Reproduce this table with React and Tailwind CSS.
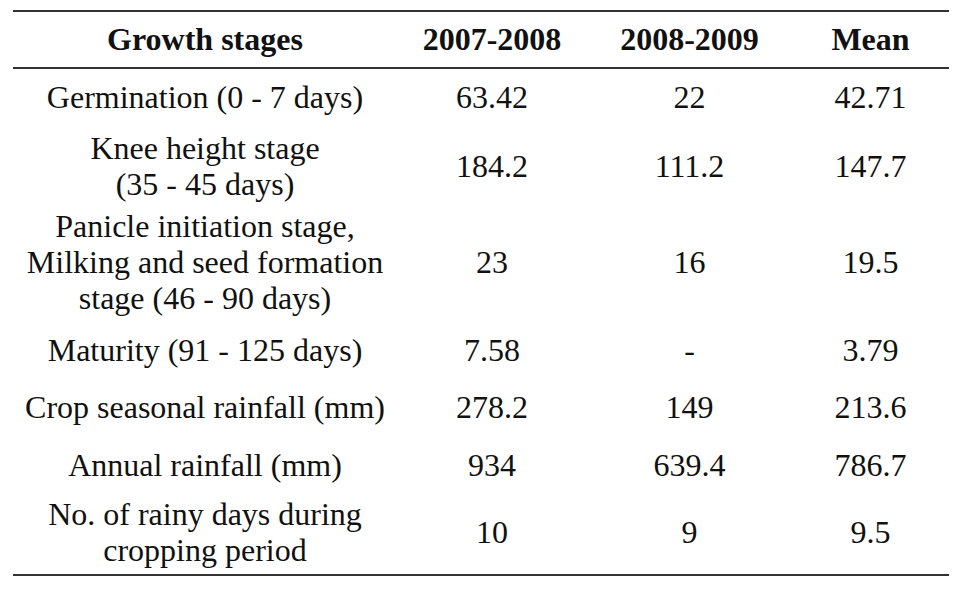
const rows = [
  { stage: ["Germination (0 - 7 days)"], a: "63.42", b: "22", mean: "42.71", pad: "pt-[10px] pb-[7px]" },
  { stage: ["Knee height stage", "(35 - 45 days)"], a: "184.2", b: "111.2", mean: "147.7", pad: "pt-[8px] pb-[3px]" },
  {
    stage: ["Panicle initiation stage,", "Milking and seed formation", "stage (46 - 90 days)"],
    a: "23",
    b: "16",
    mean: "19.5",
    pad: "pt-[3px] pb-[8px]",
  },
  { stage: ["Maturity (91 - 125 days)"], a: "7.58", b: "-", mean: "3.79", pad: "pt-[8px] pb-[10px]" },
  { stage: ["Crop seasonal rainfall (mm)"], a: "278.2", b: "149", mean: "213.6", pad: "pt-[11px] pb-[11px]" },
  { stage: ["Annual rainfall (mm)"], a: "934", b: "639.4", mean: "786.7", pad: "pt-[11px] pb-[6px]" },
  { stage: ["No. of rainy days during", "cropping period"], a: "10", b: "9", mean: "9.5", pad: "pt-[7px] pb-[6px]" },
];

function Row({ cells, pad, bold }) {
  return (
    <div className={`grid grid-cols-[384px_190px_205px_157px] items-center ${pad}`}>
      {cells.map((c, i) => (
        <div key={i} className={`text-center whitespace-nowrap ${bold ? "font-bold" : ""}`}>
          {Array.isArray(c)
            ? c.map((line, j) => <div key={j}>{line}</div>)
            : c}
        </div>
      ))}
    </div>
  );
}

export default function App() {
  return (
    <div className="w-[956px] h-[594px] bg-white pt-[10px] pl-[13px] text-[32px] leading-[36px] text-[#111] font-['Liberation_Serif','Times_New_Roman',serif]">
      <div className="w-[936px] border-y-2 border-[#333]">
        <div className="border-b-2 border-[#333]">
          <Row
            bold
            pad="pt-[9px] pb-[10px]"
            cells={["Growth stages", "2007-2008", "2008-2009", "Mean"]}
          />
        </div>
        {rows.map((r, i) => (
          <Row key={i} pad={r.pad} cells={[r.stage, r.a, r.b, r.mean]} />
        ))}
      </div>
    </div>
  );
}
